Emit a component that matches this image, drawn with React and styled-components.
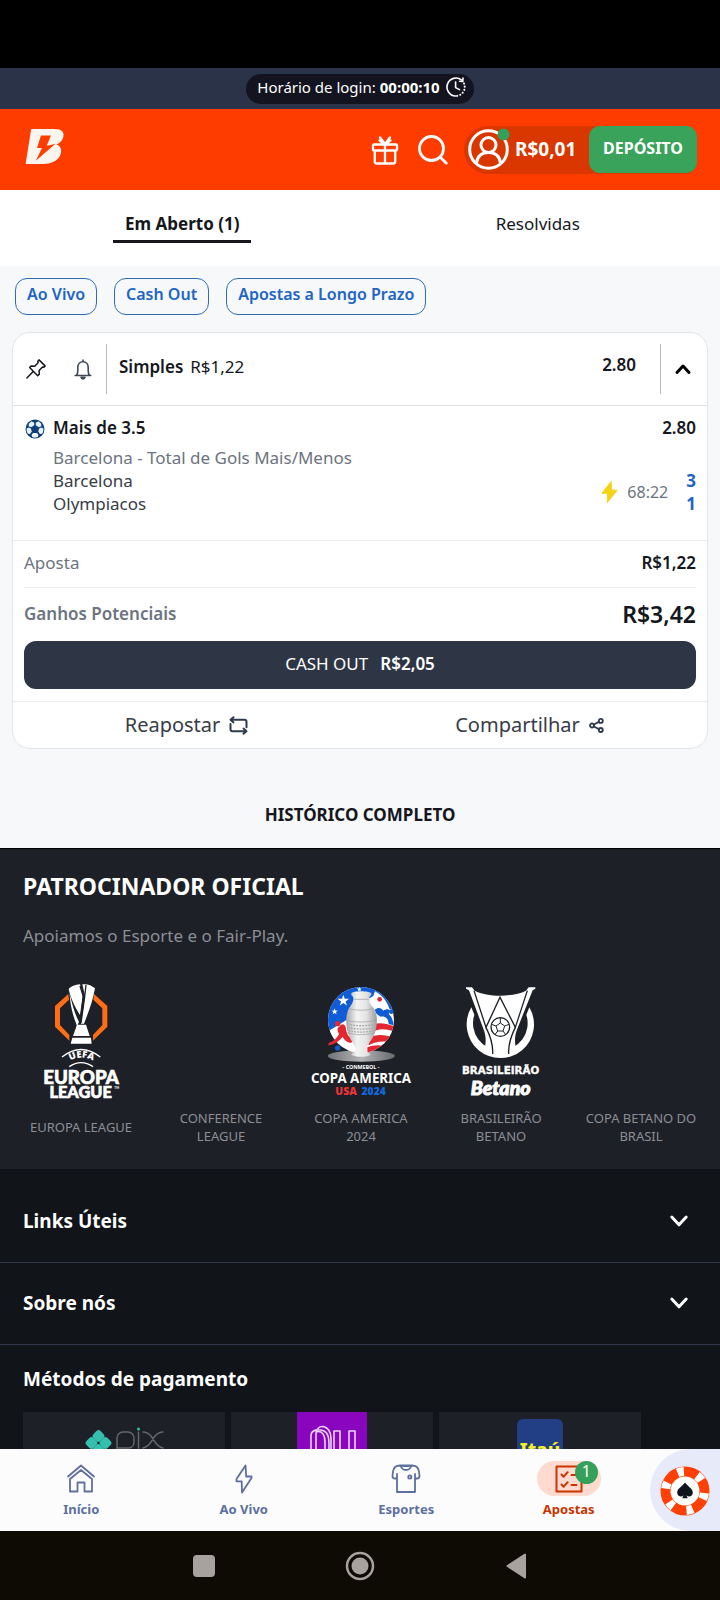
import React from "react";
import styled, { createGlobalStyle } from "styled-components";

const GlobalStyle = createGlobalStyle`
  *, *::before, *::after { box-sizing: border-box; }
  html, body { margin: 0; padding: 0; }
  body {
    background: #000;
    font-family: "Noto Sans", "Open Sans", sans-serif;
    font-size: 16px;
    line-height: 22px;
    color: #15171d;
  }
  button {
    font: inherit;
    color: inherit;
    background: none;
    border: 0;
    padding: 0;
    cursor: pointer;
  }
  a { color: inherit; text-decoration: none; }
  h2, h3, p, ul, dl, dd { margin: 0; padding: 0; }
  svg { display: block; flex: none; overflow: visible; }
`;

/* ---------- shell ---------- */

const Shell = styled.div`
  display: flex;
  flex-direction: column;
  height: 100vh;
  overflow: hidden;
`;

const StatusBar = styled.div`
  flex: none;
  height: 68px;
  background: #000;
`;

const LoginBar = styled.div`
  flex: none;
  display: flex;
  justify-content: center;
  align-items: center;
  height: 41px;
  background: #2a3347;
`;

const LoginPill = styled.div`
  display: flex;
  align-items: center;
  gap: 4px;
  height: 30px;
  padding: 0 8px 3px 11px;
  border-radius: 15px;
  background: #131420;
  color: #fff;
  font-size: 15px;
  line-height: 20px;

  strong { font-weight: 700; }
  svg { margin-left: 2px; }
`;

const Header = styled.header`
  flex: none;
  display: flex;
  align-items: center;
  height: 81px;
  padding: 0 23px 0 25px;
  background: #ff3c00;
  color: #fff;
`;

const LogoLink = styled.a`
  margin-right: auto;
  padding-bottom: 6px;
`;

const IconButton = styled.button`
  display: flex;
  align-items: center;
  justify-content: center;
  width: ${(p) => p.$width}px;
  height: ${(p) => p.$height || 48}px;
`;

const Wallet = styled.div`
  display: flex;
  align-items: center;
  height: 48px;
  margin-left: 7px;
  border-radius: 24px 12px 12px 24px;
  background: #d93600;
`;

const Balance = styled.button`
  display: flex;
  align-items: center;
  gap: 5px;
  width: 125px;
  padding: 0 0 2px 4px;
  font-size: 19px;
  line-height: 24px;
  font-weight: 700;
  white-space: nowrap;
`;

const Deposit = styled.button`
  width: 108px;
  height: 47px;
  padding-bottom: 3px;
  border-radius: 11px;
  background: #39a35b;
  font-size: 16px;
  font-weight: 700;
`;

const Main = styled.main`
  flex: 1;
  min-height: 0;
  overflow-y: auto;
  scrollbar-width: none;
  background: #f6f8fa;
`;

/* ---------- tabs and filters ---------- */

const Tabs = styled.div`
  display: grid;
  grid-template-columns: 1fr 1fr;
  justify-items: center;
  height: 76px;
  padding: 21px 3px 0 0;
  background: #fff;
`;

const Tab = styled.button`
  height: 32px;
  padding: 0 12px 3px;
  border-bottom: 3px solid ${(p) => (p.$active ? "#15171d" : "transparent")};
  font-size: 17px;
  font-weight: ${(p) => (p.$active ? 700 : 400)};
  margin-left: ${(p) => (p.$active ? 6 : 0)}px;
`;

const Filters = styled.div`
  display: flex;
  gap: 17px;
  padding: 12px 15px 17px;
`;

const Chip = styled.button`
  height: 37px;
  padding: 0 11px 5px;
  border: 1px solid #2c6cb4;
  border-radius: 12px;
  color: #2164c4;
  font-weight: 600;
`;

/* ---------- bet card ---------- */

const Card = styled.article`
  margin: 0 12px;
  border: 1px solid #e1e5ea;
  border-radius: 18px;
  background: #fff;
`;

const CardHeader = styled.div`
  display: flex;
  align-items: center;
  height: 73px;
  padding-right: 3px;
  border-bottom: 1px solid #dfe2e6;
`;

const Rule = styled.span`
  width: 1px;
  height: 50px;
  background: #b5b8bc;
`;

const CardTitle = styled.div`
  display: flex;
  flex: 1;
  gap: 7px;
  padding: 0 12px 4px;
  font-size: 17px;
`;

const Strong = styled.strong`
  font-weight: 600;
`;

const HeaderOdds = styled.strong`
  padding: 0 24px 8px 0;
  font-size: 17px;
  font-weight: 600;
`;

const Selection = styled.section`
  display: grid;
  grid-template-columns: 28px 1fr auto;
  padding: 10px 11px 25px 12px;
  border-bottom: 1px solid #e9ebee;
  font-size: 17px;
  line-height: 23px;

  > svg { margin-top: 3px; }
  > strong { text-align: right; }
`;

const Pick = styled.h3`
  font-size: 17px;
  line-height: 24px;
  font-weight: 600;
`;

const Market = styled.p`
  grid-column: 2 / 4;
  padding-top: 6px;
  color: #6c7480;
`;

const Teams = styled.div`
  grid-column: 2;
  color: #373c47;
`;

const Live = styled.div`
  display: flex;
  align-items: center;
  gap: 9px;
  font-size: 16px;
  color: #6c7480;
`;

const Scores = styled.div`
  display: grid;
  margin-left: 9px;
  color: #2164c4;
  font-size: 17px;
  font-weight: 700;
  text-align: right;
`;

const Amounts = styled.dl`
  padding: 0 11px;
`;

const AmountRow = styled.div`
  display: flex;
  justify-content: space-between;
  align-items: center;
  height: ${(p) => (p.$total ? 53 : 47)}px;
  padding-bottom: 2px;
  border-bottom: ${(p) => (p.$total ? "0" : "1px solid #e9ebee")};

  dt {
    color: #6c7480;
    font-size: 17px;
    font-weight: ${(p) => (p.$total ? 600 : 400)};
  }
  dd {
    font-size: ${(p) => (p.$total ? 23 : 17)}px;
    font-weight: 600;
  }
`;

const CashOut = styled.button`
  display: flex;
  justify-content: center;
  align-items: center;
  gap: 12px;
  width: calc(100% - 22px);
  height: 48px;
  margin: 0 11px 12px;
  padding-bottom: 2px;
  border-radius: 12px;
  background: #2e3646;
  color: #fff;
  font-size: 17px;
`;

const Actions = styled.div`
  display: grid;
  grid-template-columns: 1fr 1fr;
  border-top: 1px solid #ebedf0;
`;

const Action = styled.button`
  display: flex;
  justify-content: center;
  align-items: center;
  gap: 9px;
  height: 46px;
  padding-right: ${(p) => p.$inset || 0}px;
  font-size: 20px;
  color: #373c47;
`;

const HistoryLink = styled.a`
  display: block;
  padding: 55px 0 22px;
  border-bottom: 1px solid #000;
  text-align: center;
  font-size: 17px;
  font-weight: 700;
`;

/* ---------- footer ---------- */

const Sponsor = styled.section`
  padding: 21px 9px 24px 11px;
  background: #1e2027;
  color: #8c8e95;
`;

const SponsorTitle = styled.h2`
  padding: 0 12px;
  color: #fff;
  font-size: 23px;
  line-height: 32px;
  font-weight: 700;
`;

const SponsorText = styled.p`
  padding: 23px 12px 33px;
  font-size: 17px;
`;

const SponsorGrid = styled.div`
  display: grid;
  grid-template-columns: repeat(5, 1fr);
`;

const SponsorItem = styled.a`
  display: flex;
  flex-direction: column;
  align-items: center;
`;

const LogoSlot = styled.div`
  height: 120px;
  margin-bottom: 9px;
`;

const Caption = styled.span`
  display: flex;
  align-items: center;
  min-height: 36px;
  padding: 0 12px;
  font-size: 13px;
  line-height: 18px;
  text-align: center;
`;

const FooterLinks = styled.footer`
  padding-top: 12px;
  background: #111419;
  color: #fff;
`;

const Accordion = styled.button`
  display: flex;
  justify-content: space-between;
  align-items: center;
  width: 100%;
  height: 82px;
  padding: 0 32px 1px 23px;
  border-bottom: 1px solid #31364a;
  font-size: 19px;
  font-weight: 700;
`;

const PaymentTitle = styled.h3`
  padding: 22px 23px 21px;
  font-size: 19px;
  line-height: 24px;
  font-weight: 700;
`;

const Payments = styled.div`
  display: flex;
  flex-wrap: wrap;
  gap: 6px;
  padding: 0 23px 12px;
`;

const Payment = styled.div`
  display: flex;
  justify-content: center;
  width: 202px;
  height: 72px;
  background: #1e2027;
`;

/* ---------- bottom navigation ---------- */

const BottomNav = styled.nav`
  flex: none;
  display: flex;
  height: 82px;
  background: #fcfcfd;
`;

const NavItem = styled.a`
  flex: 1;
  display: flex;
  flex-direction: column;
  align-items: center;
  padding-top: 12px;
  color: ${(p) => (p.$active ? "#c93400" : "#5d6f9d")};
  font-size: 13px;
  line-height: 20px;
  font-weight: 700;
`;

const NavIcon = styled.span`
  position: relative;
  display: flex;
  align-items: center;
  justify-content: center;
  width: 64px;
  height: 35px;
  margin-bottom: 3px;
  border-radius: 18px;
  background: ${(p) => (p.$active ? "#ffdacf" : "transparent")};
`;

const Badge = styled.span`
  position: absolute;
  top: 0;
  right: 3px;
  width: 23px;
  height: 23px;
  border-radius: 12px;
  background: #34a05a;
  color: #fff;
  font-size: 16px;
  line-height: 21px;
  font-weight: 400;
  text-align: center;
`;

const Casino = styled.button`
  display: flex;
  align-items: center;
  justify-content: center;
  width: 70px;
  height: 82px;
  padding-top: 2px;
  border-radius: 44px 0 0 44px;
  background: #e7ebf9;
`;

const SystemNav = styled.div`
  flex: none;
  display: flex;
  justify-content: center;
  height: 69px;
  background: #0e0a04;
`;

/* ---------- drawings ---------- */

const stroke = (color, width) => ({
  fill: "none",
  stroke: color,
  strokeWidth: width,
  strokeLinecap: "round",
  strokeLinejoin: "round",
});

const ClockIcon = () => (
  <svg width="20" height="20" viewBox="0 0 20 20" {...stroke("#fff", 1.6)}>
    <path d="M9.5 19A9 9 0 1 1 15.5 2.9" />
    <path d="M13.6 4.2l3.2.3.2-3.4" />
    <path d="M18 6.5A9 9 0 0 1 10 19" strokeDasharray=".1 3.1" strokeWidth="2" />
    <path d="M9.6 5v5.6l4 2" />
  </svg>
);

const BrandMark = () => (
  <svg width="40" height="36" viewBox="0 0 40 36" aria-label="Betano">
    <path
      fill="#fbf5f0"
      fillRule="evenodd"
      d="M6.2 0H30c6.500 0 9.600 3 8.300 8-.9 3.300-3.300 6.200-7 7.600 4 1.300 5.700 4.500 4.500 9-1.500 6.300-8 10.400-18 10.400H.6zM16 6.500L12 19h5l-6.200 12.800L30.500 14.800c-2.500.9-5 1.500-8.700 1.700L26 6.500z"
    />
  </svg>
);

const GiftIcon = () => (
  <svg width="28" height="30" viewBox="0 0 28 30" {...stroke("#fff", 2.3)}>
    <path d="M3 9.500h22a1 1 0 0 1 1 1v4a1 1 0 0 1-1 1H3a1 1 0 0 1-1-1v-4a1 1 0 0 1 1-1zM3.800 15.500v11a2 2 0 0 0 2 2h16.400a2 2 0 0 0 2-2v-11M14 9.500v19M9 2.500l5 6.500 5-6.500M8.500 5.500l5 3.500M19.500 5.500l-5 3.500" />
  </svg>
);

const SearchIcon = () => (
  <svg width="30" height="30" viewBox="0 0 30 30" {...stroke("#fff", 2.800)}>
    <circle cx="13.500" cy="13.500" r="12" />
    <path d="M22.300 22.300l6 6" />
  </svg>
);

const AvatarIcon = () => (
  <svg width="42" height="42" viewBox="0 0 42 42" {...stroke("#fff", 3)}>
    <circle cx="20.500" cy="21.500" r="18.800" />
    <circle cx="20.500" cy="17" r="7.500" />
    <path d="M8.500 35c1-7 5.500-10.500 12-10.500s11 3.500 12 10.500" />
    <circle cx="35.500" cy="6.500" r="6" fill="#34a05a" stroke="none" />
  </svg>
);

const PinIcon = () => (
  <svg width="20" height="20" viewBox="0 0 20 20" {...stroke("#15171d", 1.5)}>
    <path d="M13 .9l6.100 6-1.200 1.400-1.400-.3-3.400 3.600.2 3.500-1.600 1.600L3.600 8.500l1.700-1.600 3.400.3 3.400-3.400-.3-1.600zM7.200 12.500L.9 19" />
  </svg>
);

const BellIcon = () => (
  <svg width="18" height="21" viewBox="0 0 18 21" {...stroke("#3f4856", 1.6)}>
    <path d="M1.200 16.500h15.600M2.500 16.300c1-1.200 1.300-2.500 1.300-4.500V8.500C3.800 5 6 2.700 9 2.700s5.200 2.300 5.200 5.800v3.300c0 2 .3 3.300 1.300 4.500M9 2.500V1" />
    <path d="M7 18.200h4c-.2 1.200-.9 1.800-2 1.800s-1.800-.6-2-1.800z" fill="#3f4856" />
  </svg>
);

const Chevron = ({ up, color }) => (
  <svg width="18" height="12" viewBox="0 0 18 12" {...stroke(color, 3)}>
    <path d={up ? "M3 9.500l6-6.500 6 6.500" : "M1.800 2l7.200 7.800L16.200 2"} />
  </svg>
);

const BallIcon = () => (
  <svg width="20" height="20" viewBox="0 0 20 20">
    <circle cx="10" cy="10" r="9.500" fill="#0d3f7e" />
    <g fill="#e9f1fa">
      <path d="M6.500 2.300L9.200 3.800v2.400L6.200 8.300 3.600 7.300 3.800 4.800zM13.500 2.300l-2.700 1.500v2.400l3 2.100 2.600-1-.2-2.500z" />
      <path d="M1.600 9.400l2-.8 2.300 1 .9 3-1.800 2.300-2.200-.2C1.900 13 1.500 11.300 1.600 9.400zM18.400 9.400l-2-.8-2.300 1-.9 3 1.800 2.300 2.200-.2c.9-1.700 1.300-3.400 1.200-5.300zM8 14h4l1.500 2-.8 2c-1.800.7-3.600.7-5.400 0l-.8-2z" />
    </g>
  </svg>
);

const BoltFill = () => (
  <svg width="17" height="22" viewBox="0 0 17 22">
    <path d="M10.200.5L.8 12.300h5.700L6.300 21.500 16.200 9.200h-5.800z" fill="#f5d214" stroke="#f5d214" strokeLinejoin="round" />
  </svg>
);

const RepeatIcon = () => (
  <svg width="19" height="19" viewBox="0 0 19 19" {...stroke("#2f3b4c", 2)}>
    <path d="M4.500 1.200L1.500 3.800l3 2.600M2 3.800h13.500a2 2 0 0 1 2 2v5.400M14.500 12.600l3 2.600-3 2.600M17 15.200H3.500a2 2 0 0 1-2-2V8" />
  </svg>
);

const ShareIcon = () => (
  <svg width="15" height="15" viewBox="0 0 15 15" {...stroke("#2f3b4c", 1.8)}>
    <circle cx="3" cy="7.500" r="2" />
    <circle cx="11.800" cy="2.900" r="2" />
    <circle cx="11.800" cy="12" r="2" />
    <path d="M4.900 6.500L9.900 3.900M4.900 8.500l5 2.600" />
  </svg>
);

const EuropaLogo = () => (
  <svg width="90" height="120" viewBox="108 60 270 360" fontFamily="Lato, sans-serif" fontWeight="900" fill="#fff">
    <path d="M205 102l-40 36v62l43 42v-17l-28-30v-50l27-26zM282 102l40 36v62l-43 42v-17l28-30v-50l-27-26z" fill="#ff6d14" />
    <path d="M206 87c6-7 20-13 34-14l8 34-8 58c-13-20-28-48-34-78z" />
    <path d="M247 73c14-2 28 3 38 12-5 28-14 58-24 82l-9 24h-9l12-84zM209 100c6 30 16 62 28 86l-6 12c-12-30-21-63-22-98z" />
    <path d="M231 194h27l11 34h-50zM217 233h56l2 18h-63z" />
    <path d="M240 78l10 32-9 76M258 75l-4 36-11 78" fill="none" stroke="#1e2027" strokeWidth="4" />
    <path d="M186 291q57-45 115 0M208 320q35-24 71 0" fill="none" stroke="#fff" strokeWidth="4" />
    <path id="uefa-arc" d="M196 311q47-36 98 0" fill="none" />
    <text fontSize="28" fontFamily="Open Sans, sans-serif" fontWeight="800">
      <textPath href="#uefa-arc" startOffset="50%" textAnchor="middle">UEFA</textPath>
    </text>
    <g stroke="#fff" strokeWidth="2">
      <text x="243" y="371" textAnchor="middle" fontSize="56">EUROPA</text>
      <text x="242" y="415" textAnchor="middle" fontSize="49">LEAGUE</text>
    </g>
    <text x="343" y="388" fontSize="9">TM</text>
  </svg>
);

const star = (cx, cy, r) =>
  Array.from({ length: 10 }, (_, i) => {
    const a = (Math.PI / 5) * i - Math.PI / 2;
    const d = i % 2 ? r * 0.4 : r;
    return `${cx + d * Math.cos(a)},${cy + d * Math.sin(a)}`;
  }).join(" ");

const CopaLogo = () => (
  <svg width="100" height="120" viewBox="93 60 300 360">
    <defs>
      <linearGradient id="silver">
        <stop offset="0" stopColor="#a9a9ab" />
        <stop offset=".35" stopColor="#f4f4f4" />
        <stop offset=".65" stopColor="#e5e5e5" />
        <stop offset="1" stopColor="#9b9b9e" />
      </linearGradient>
      <linearGradient id="plinth">
        <stop offset="0" stopColor="#707276" />
        <stop offset=".5" stopColor="#b5b5b7" />
        <stop offset="1" stopColor="#66686c" />
      </linearGradient>
      <clipPath id="disc">
        <circle cx="243" cy="180" r="99" />
      </clipPath>
    </defs>
    <ellipse cx="244" cy="288" rx="101" ry="17" fill="url(#plinth)" />
    <g clipPath="url(#disc)">
      <rect x="140" y="78" width="206" height="204" fill="#fff" />
      <path d="M140 78h150l-10 30c-40 20-60 60-90 78l-50 30z" fill="#0f5cd6" />
      <path d="M262 200c30-16 50-12 84 0v16c-34-14-56-10-80 6zM262 236c30-16 50-12 84-2v16c-34-10-60-6-80 6zM262 262c20-8 40-8 70 0l-30 20h-40z" fill="#e3262f" />
      <path d="M280 80c30 10 55 35 62 70l-14-4c-6-22-24-44-50-56zM284 150c10-8 18-8 26 2 8-6 16-6 20 0l-4 10c10 8 14 20 14 34l-14-4c0-16-10-24-24-22l-12-8z" fill="#0f5cd6" />
      <g fill="#fff">
        <polygon points={star(190, 122, 18)} />
        <polygon points={star(164, 155, 10)} />
        <polygon points={star(238, 88, 8)} />
      </g>
    </g>
    <circle cx="299" cy="118" r="7" fill="#e3262f" />
    <circle cx="334" cy="155" r="7" fill="#0f5cd6" />
    <circle cx="173" cy="191" r="8" fill="#e3262f" />
    <circle cx="173" cy="264" r="8" fill="#0f5cd6" />
    <path d="M178 200c10-14 20-6 20 8 2 14 8 26 24 30l-8 10c-12 0-22-8-26-18-8 10-22 24-44 26l3-8c14-4 22-12 30-26-4-10-8-18 1-22z" fill="#e3262f" />
    <path
      d="M214 100c4-8 54-8 60 0 2 8-6 8-6 14-2 18 8 22 14 32 14 22 10 60-2 84-8 14-20 26-22 40 4 8 12 8 14 14-10 8-46 8-58 0 2-6 12-6 14-14-2-14-14-26-20-40-10-24-14-60-2-84 6-10 14-16 14-32 0-6-8-6-6-14z"
      fill="url(#silver)"
    />
    <path d="M220 118h46M206 146c20 6 54 6 74 0M198 180c30 8 64 8 92 0M202 218c24 8 56 8 82 0" fill="none" stroke="#9d9da0" strokeWidth="2" />
    <path d="M202 192c26 7 58 7 86 0M203 202c26 7 58 7 84 0M205 211c24 7 54 7 80 0" fill="none" stroke="#aaaaad" strokeWidth="4" strokeDasharray="6 3" />
    <g textAnchor="middle" fontFamily="Noto Sans, sans-serif" fontWeight="700">
      <text x="243" y="326" fontSize="16" fill="#fff">- CONMEBOL -</text>
      <text x="243" y="368" fontSize="40" fill="#fff">COPA AMERICA</text>
      <text x="198" y="405" fontSize="31" fontWeight="900" fill="#ee3338">USA</text>
      <text x="281" y="405" fontSize="31" fontWeight="900" fill="#1466dc">2024</text>
    </g>
  </svg>
);

const BrasileiraoLogo = () => (
  <svg width="90" height="120" viewBox="528 60 270 360" fill="#fff">
    <path d="M574 142a101 101 0 1 0 174 0l-9 22a82 82 0 1 1-156 0z" />
    <path d="M558 82h18l8 10c40 20 114 20 154 0l8-10h20v4l-8 5-46 115c-10 24-8 46-2 68l-12 8h-74l-12-8c6-22 8-44-2-68L567 91l-9-5z" />
    <g fill="none" stroke="#1e2027" strokeWidth="4">
      <path d="M582 92l36 110 42-90 46 90 36-110" />
      <path d="M618 202c12 24 22 48 20 80M706 202c-12 24-22 48-20 80" />
      <circle cx="661" cy="201" r="28" />
      <path d="M661 189l13 9-5 15h-16l-5-15zM661 189v-15M674 198l13-5M669 213l9 12M653 213l-9 12M648 198l-13-5" strokeWidth="3" />
    </g>
    <g textAnchor="middle" stroke="#fff">
      <text x="662" y="342" fontSize="31" fontFamily="DejaVu Sans, sans-serif" fontWeight="700">BRASILEIRÃO</text>
      <text x="662" y="404" fontSize="59" fontFamily="Lato, sans-serif" fontWeight="900" fontStyle="italic" strokeWidth="3">Betano</text>
    </g>
  </svg>
);

const PixLogo = () => (
  <svg width="78" height="50" viewBox="0 0 78 50">
    <g transform="translate(13.500 31)" fill="#35bfae">
      {[0, 90, 180, 270].map((a) => (
        <rect key={a} x="-5" y="-5" width="10" height="10" rx="3" transform={`rotate(${a}) translate(0 -7) rotate(45)`} />
      ))}
    </g>
    <g {...stroke("#63666b", 1.5)}>
      <path d="M32 46V26a6 6 0 0 1 6-6h5a6 6 0 0 1 6 6v5a6 6 0 0 1-6 5h-10M53.500 20v16M58 20c4 0 6 2 8 4l4 6c2 3 4 5 8 6M78 20c-4 0-6 2-8 4l-4 6c-2 3-4 5-8 6" />
    </g>
    <circle cx="53.500" cy="17" r="1.500" fill="#35bfae" />
  </svg>
);

const NuLogo = () => (
  <svg width="70" height="72" viewBox="0 0 70 72">
    <rect width="70" height="72" fill="#8a05be" />
    <g {...stroke("#ecd3f6", 1.600)}>
      <path d="M14 56V24c0-7 8-7 13-5 4 2 5 6 5 12v25M19 56V22c0-11 15-10 15 4v30M19 20c6-2 9 3 9 10v26M37 19h6v24c0 12 15 12 15 0V19h-6v22M37 19v24c0 6 3 10 7 12M52 19h6" />
    </g>
  </svg>
);

const ItauLogo = () => (
  <svg width="46" height="72" viewBox="0 0 46 72">
    <rect y="7" width="46" height="46" rx="6" fill="#223f86" />
    <text x="23" y="45" textAnchor="middle" fontFamily="Noto Sans, sans-serif" fontWeight="800" fontSize="19" fill="#f4ee22">
      Itaú
    </text>
  </svg>
);

const HomeIcon = () => (
  <svg width="28" height="30" viewBox="0 0 28 30" {...stroke("#5d6f9d", 1.8)}>
    <path d="M1 12.500L14 1.500l13 11M3 17v10.500h7.500v-9h7v9H25V17M3 17v-2L14 6l11 9v2" />
  </svg>
);

const BoltIcon = () => (
  <svg width="18" height="30" viewBox="0 0 18 30" {...stroke("#5d6f9d", 1.8)}>
    <path d="M10.500 1.500L1.500 15v2.300h5.200L7 28.500 16.500 14v-1.500h-5.300z" />
  </svg>
);

const ShirtIcon = () => (
  <svg width="30" height="30" viewBox="0 0 30 30" {...stroke("#5d6f9d", 1.8)}>
    <path d="M9 1.500h12c4 0 6.500 2 7 6l.5 4.500c0 1.500-1 2.500-2.500 2.500h-2v13.500H6V14.500H4c-1.500 0-2.700-1-2.500-2.500L2 7.500c.5-4 3-6 7-6zM9.500 1.500c1 3 3 4.500 5.500 4.500s4.500-1.500 5.500-4.500M12 2h6M6 14.500V10M24 14.500V10" />
    <circle cx="18.800" cy="13" r="1.600" />
  </svg>
);

const TicketIcon = () => (
  <svg width="28" height="28" viewBox="0 0 28 28" {...stroke("#c93400", 2)}>
    <path d="M1.500 1.500h25v25h-25zM6.500 9.500l2.200 2.200 4-4.500M16.500 10h5M6.500 19.500l2.200 2.200 4-4.500M16.500 20h5" />
  </svg>
);

const PokerChip = () => (
  <svg width="50" height="50" viewBox="0 0 50 50">
    <circle cx="25" cy="25" r="24.500" fill="#ff3f04" />
    <circle cx="25" cy="25" r="19.500" fill="none" stroke="#fff" strokeWidth="9" strokeDasharray="6.420 14" transform="rotate(6 25 25)" />
    <circle cx="25" cy="25" r="14.500" fill="#fff" />
    <path d="M25 16.500c2.500 3.700 7.800 6 7.800 10 0 4-4.300 5.200-6.400 2.800l1.400 3h-5.600l1.400-3c-2.100 2.400-6.400 1.200-6.400-2.800 0-4 5.300-6.300 7.800-10z" fill="#10141c" />
  </svg>
);

/* ---------- page ---------- */

const sponsors = [
  { name: "EUROPA LEAGUE", logo: <EuropaLogo /> },
  { name: "CONFERENCE LEAGUE" },
  { name: "COPA AMERICA 2024", logo: <CopaLogo /> },
  { name: "BRASILEIRÃO BETANO", logo: <BrasileiraoLogo /> },
  { name: "COPA BETANO DO BRASIL" },
];

export default function App() {
  return (
    <>
      <GlobalStyle />
      <Shell>
        <StatusBar />
        <LoginBar>
          <LoginPill>
            <span>Horário de login:</span>
            <strong>00:00:10</strong>
            <ClockIcon />
          </LoginPill>
        </LoginBar>
        <Header>
          <LogoLink href="#inicio" aria-label="Betano">
            <BrandMark />
          </LogoLink>
          <IconButton $width={48} aria-label="Promoções">
            <GiftIcon />
          </IconButton>
          <IconButton $width={48} aria-label="Buscar">
            <SearchIcon />
          </IconButton>
          <Wallet>
            <Balance>
              <AvatarIcon />
              R$0,01
            </Balance>
            <Deposit>DEPÓSITO</Deposit>
          </Wallet>
        </Header>

        <Main>
          <Tabs>
            <Tab $active>Em Aberto (1)</Tab>
            <Tab>Resolvidas</Tab>
          </Tabs>
          <Filters>
            <Chip>Ao Vivo</Chip>
            <Chip>Cash Out</Chip>
            <Chip>Apostas a Longo Prazo</Chip>
          </Filters>

          <Card>
            <CardHeader>
              <IconButton $width={46} aria-label="Fixar">
                <PinIcon />
              </IconButton>
              <IconButton $width={47} aria-label="Notificações">
                <BellIcon />
              </IconButton>
              <Rule />
              <CardTitle>
                <Strong>Simples</Strong>
                <span>R$1,22</span>
              </CardTitle>
              <HeaderOdds>2.80</HeaderOdds>
              <Rule />
              <IconButton $width={43} aria-label="Recolher">
                <Chevron up color="#000" />
              </IconButton>
            </CardHeader>
            <Selection>
              <BallIcon />
              <Pick>Mais de 3.5</Pick>
              <Strong>2.80</Strong>
              <Market>Barcelona - Total de Gols Mais/Menos</Market>
              <Teams>
                <div>Barcelona</div>
                <div>Olympiacos</div>
              </Teams>
              <Live>
                <BoltFill />
                <span>68:22</span>
                <Scores>
                  <span>3</span>
                  <span>1</span>
                </Scores>
              </Live>
            </Selection>
            <Amounts>
              <AmountRow>
                <dt>Aposta</dt>
                <dd>R$1,22</dd>
              </AmountRow>
              <AmountRow $total>
                <dt>Ganhos Potenciais</dt>
                <dd>R$3,42</dd>
              </AmountRow>
            </Amounts>
            <CashOut>
              <span>CASH OUT</span>
              <Strong>R$2,05</Strong>
            </CashOut>
            <Actions>
              <Action>
                Reapostar <RepeatIcon />
              </Action>
              <Action $inset={8}>
                Compartilhar <ShareIcon />
              </Action>
            </Actions>
          </Card>

          <HistoryLink href="#historico">HISTÓRICO COMPLETO</HistoryLink>

          <Sponsor>
            <SponsorTitle>PATROCINADOR OFICIAL</SponsorTitle>
            <SponsorText>Apoiamos o Esporte e o Fair-Play.</SponsorText>
            <SponsorGrid>
              {sponsors.map(({ name, logo }) => (
                <SponsorItem key={name} href="#patrocinio">
                  <LogoSlot>{logo}</LogoSlot>
                  <Caption>{name}</Caption>
                </SponsorItem>
              ))}
            </SponsorGrid>
          </Sponsor>

          <FooterLinks>
            <Accordion aria-expanded="false">
              Links Úteis <Chevron color="#fff" />
            </Accordion>
            <Accordion aria-expanded="false">
              Sobre nós <Chevron color="#fff" />
            </Accordion>
            <PaymentTitle>Métodos de pagamento</PaymentTitle>
            <Payments>
              <Payment>
                <PixLogo />
              </Payment>
              <Payment>
                <NuLogo />
              </Payment>
              <Payment>
                <ItauLogo />
              </Payment>
            </Payments>
          </FooterLinks>
        </Main>

        <BottomNav>
          <NavItem href="#inicio">
            <NavIcon>
              <HomeIcon />
            </NavIcon>
            Início
          </NavItem>
          <NavItem href="#ao-vivo">
            <NavIcon>
              <BoltIcon />
            </NavIcon>
            Ao Vivo
          </NavItem>
          <NavItem href="#esportes">
            <NavIcon>
              <ShirtIcon />
            </NavIcon>
            Esportes
          </NavItem>
          <NavItem href="#apostas" $active>
            <NavIcon $active>
              <TicketIcon />
              <Badge>1</Badge>
            </NavIcon>
            Apostas
          </NavItem>
          <Casino aria-label="Cassino">
            <PokerChip />
          </Casino>
        </BottomNav>

        <SystemNav>
          <IconButton $width={156} $height={69} aria-label="Recentes">
            <svg width="22" height="22" viewBox="0 0 22 22">
              <rect width="22" height="22" rx="4" fill="#a8a29f" />
            </svg>
          </IconButton>
          <IconButton $width={156} $height={69} aria-label="Tela inicial">
            <svg width="30" height="30" viewBox="0 0 30 30">
              <circle cx="15" cy="15" r="13" fill="none" stroke="#a8a29f" strokeWidth="2.500" />
              <circle cx="15" cy="15" r="8.500" fill="#a8a29f" />
            </svg>
          </IconButton>
          <IconButton $width={156} $height={69} aria-label="Voltar">
            <svg width="21" height="26" viewBox="0 0 21 26">
              <path d="M19 1.500v23L1.500 13z" fill="#a8a29f" stroke="#a8a29f" strokeWidth="2" strokeLinejoin="round" />
            </svg>
          </IconButton>
        </SystemNav>
      </Shell>
    </>
  );
}
